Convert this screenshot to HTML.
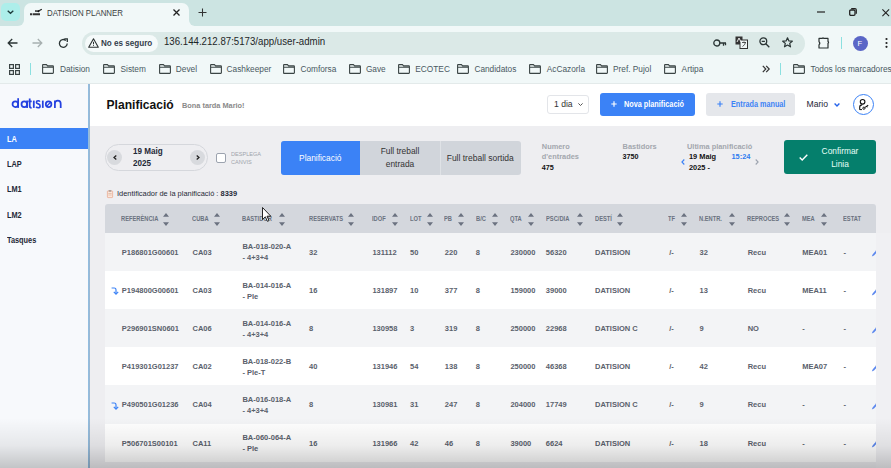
<!DOCTYPE html>
<html><head><meta charset="utf-8">
<style>
*{margin:0;padding:0;box-sizing:border-box}
html,body{width:891px;height:468px;overflow:hidden}
body{position:relative;font-family:"Liberation Sans",sans-serif;background:#eeeef1;color:#222}
.a{position:absolute;white-space:nowrap;line-height:1}
svg{position:absolute;overflow:visible}
#tabbar{position:absolute;left:0;top:0;width:891px;height:26px;background:#cce4e2}
#toolbar{position:absolute;left:0;top:26px;width:891px;height:57px;background:#f1f8f8}
.bm{position:absolute;top:64px;font-size:8.3px;color:#3c4a4a;line-height:10px}
.fold{position:absolute;top:63.5px;width:12px;height:10px}
</style></head><body>

<!-- ============ TAB BAR ============ -->
<div id="tabbar"></div>
<div class="a" style="left:1px;top:2.5px;width:18.5px;height:18.5px;background:#adeeea;border-radius:5px;z-index:2"></div>
<svg style="left:7px;top:10.3px;z-index:3" width="7" height="4" viewBox="0 0 7 4"><path d="M0.7 0.7 L3.5 3.3 L6.3 0.7" fill="none" stroke="#1c3a3a" stroke-width="1.3"/></svg>
<div class="a" style="left:18px;top:20px;width:176px;height:6px;background:#f1f8f8"></div><div class="a" style="left:12px;top:14px;width:12px;height:12px;background:#cce4e2;border-radius:0 0 6px 0"></div><div class="a" style="left:188.5px;top:14px;width:12px;height:12px;background:#cce4e2;border-radius:0 0 0 6px"></div><div class="a" style="left:24px;top:2.5px;width:164.5px;height:26px;background:#f1f8f8;border-radius:7px 7px 0 0"></div>
<!-- favicon -->
<svg style="left:29px;top:8px" width="14" height="8" viewBox="0 0 14 8"><path d="M1 6.2 H3.2 M3.8 6.2 H11" stroke="#333" stroke-width="2"/><path d="M6 3 L9 3.2 L10.5 2.5 L12.8 1.2" stroke="#222" stroke-width="1.3" fill="none"/><circle cx="9.5" cy="3.3" r="1" fill="#111"/></svg>
<div class="a" style="left:47px;top:8.8px;font-size:9px;color:#3a3f3f;transform:scaleX(0.875);transform-origin:0 0">DATISION PLANNER</div>
<svg style="left:173.3px;top:8.6px" width="7" height="7" viewBox="0 0 7 7"><path d="M0.5 0.5 L6.5 6.5 M6.5 0.5 L0.5 6.5" stroke="#222" stroke-width="1.3"/></svg>
<svg style="left:197.5px;top:7.5px" width="9" height="9" viewBox="0 0 9 9"><path d="M4.5 0.5 V8.5 M0.5 4.5 H8.5" stroke="#333" stroke-width="1.05"/></svg>
<!-- window controls -->
<svg style="left:817px;top:11px" width="8" height="2" viewBox="0 0 8 2"><path d="M0 1 H8" stroke="#222" stroke-width="1.2"/></svg>
<svg style="left:848.5px;top:8.3px" width="8" height="8" viewBox="0 0 8 8"><rect x="0.7" y="2" width="5.3" height="5.3" rx="1.1" fill="none" stroke="#222" stroke-width="1.3"/><path d="M2.2 0.7 H6 Q7.3 0.7 7.3 2 V5.8" fill="none" stroke="#222" stroke-width="1.2"/></svg>
<svg style="left:881.5px;top:8.5px" width="7.5" height="7.5" viewBox="0 0 7.5 7.5"><path d="M0.4 0.4 L7.1 7.1 M7.1 0.4 L0.4 7.1" stroke="#222" stroke-width="1.1"/></svg>

<!-- ============ TOOLBAR ============ -->
<div id="toolbar"></div>
<svg style="left:7px;top:38px" width="11" height="10" viewBox="0 0 11 10"><path d="M10.5 5 H1.2 M5.2 1 L1.2 5 L5.2 9" fill="none" stroke="#2b3535" stroke-width="1.3"/></svg>
<svg style="left:32px;top:38px" width="11" height="10" viewBox="0 0 11 10"><path d="M0.5 5 H9.8 M5.8 1 L9.8 5 L5.8 9" fill="none" stroke="#a7b0b0" stroke-width="1.3"/></svg>
<svg style="left:58px;top:37.5px" width="11" height="11" viewBox="0 0 11 11"><path d="M9.2 5.5 A3.9 3.9 0 1 1 7.8 2.4" fill="none" stroke="#2b3535" stroke-width="1.3"/><path d="M6.3 0.9 H9.3 V3.9" fill="none" stroke="#2b3535" stroke-width="1.3"/></svg>
<div class="a" style="left:81.5px;top:32px;width:723px;height:23px;background:#dbe9e7;border-radius:12px"></div>
<div class="a" style="left:84.5px;top:34.5px;width:73.5px;height:17px;background:#f5fafa;border-radius:9px"></div>
<svg style="left:88px;top:38px" width="11" height="10" viewBox="0 0 11 10"><path d="M5.5 0.8 L10.3 9.2 H0.7 Z" fill="none" stroke="#2d3333" stroke-width="1.1" stroke-linejoin="round"/><path d="M5.5 3.8 V6.3 M5.5 7.2 V8" stroke="#2d3333" stroke-width="1"/></svg>
<div class="a" style="left:101px;top:39.2px;font-size:9px;font-weight:bold;color:#34404c;transform:scaleX(0.9);transform-origin:0 0">No es seguro</div>
<div class="a" style="left:164px;top:37.4px;font-size:10.4px;color:#1d2628;transform:scaleX(0.93);transform-origin:0 0">136.144.212.87:5173/app/user-admin</div>
<!-- right icons -->
<svg style="left:712.5px;top:38.5px" width="14" height="8" viewBox="0 0 14 8"><circle cx="3.8" cy="4" r="3" fill="none" stroke="#2b3535" stroke-width="1.3"/><path d="M6.8 4 H13 M10.5 4 V6.8 M12.5 4 V6.2" fill="none" stroke="#2b3535" stroke-width="1.3"/></svg>
<svg style="left:735px;top:36px" width="13" height="13" viewBox="0 0 13 13"><rect x="0.5" y="0.5" width="7" height="8" fill="#333" /><rect x="5" y="4" width="7.5" height="8.5" fill="#f1f8f8" stroke="#333" stroke-width="1"/><path d="M2 6 L4 2 L6 6" stroke="#fff" fill="none" stroke-width="0.9"/><path d="M7 6.5 H11 M9 5.5 V6.5 M7.5 10.5 Q10 9 10.5 6.5" stroke="#333" fill="none" stroke-width="0.8"/></svg>
<svg style="left:758.5px;top:37px" width="11" height="11" viewBox="0 0 11 11"><circle cx="4.3" cy="4.3" r="3.4" fill="none" stroke="#2b3535" stroke-width="1.3"/><path d="M6.8 6.8 L10.3 10.3 M2.7 4.3 H5.9" stroke="#2b3535" stroke-width="1.3"/></svg>
<svg style="left:781.5px;top:37px" width="11" height="11" viewBox="0 0 11 11"><path d="M5.5 0.8 L6.9 4 L10.3 4.2 L7.7 6.4 L8.5 9.8 L5.5 8 L2.5 9.8 L3.3 6.4 L0.7 4.2 L4.1 4 Z" fill="none" stroke="#2b3535" stroke-width="1.2" stroke-linejoin="round"/></svg>
<svg style="left:817.5px;top:36.5px" width="12" height="12" viewBox="0 0 12 12"><path d="M1 1.4 H4.3 Q5 0.4 5.7 1.4 H10 V4.6 Q11.1 5.4 10 6.2 V11 H1 V7.8 Q2.6 6.2 1 4.6 Z" fill="none" stroke="#2a3232" stroke-width="1.2" stroke-linejoin="round"/></svg>
<div class="a" style="left:840.5px;top:37px;width:1.2px;height:12px;background:#8be0e0"></div>
<div class="a" style="left:853px;top:35.5px;width:15px;height:15px;border-radius:50%;background:#5a66c6"></div>
<div class="a" style="left:857.5px;top:39.5px;font-size:7.5px;color:#fff">F</div>
<svg style="left:884.5px;top:37px" width="3" height="12" viewBox="0 0 3 12"><circle cx="1.5" cy="2" r="1.1" fill="#222"/><circle cx="1.5" cy="6" r="1.1" fill="#222"/><circle cx="1.5" cy="9.8" r="1.1" fill="#222"/></svg>

<!-- ============ BOOKMARKS ============ -->
<svg style="left:9px;top:64px" width="11" height="11" viewBox="0 0 11 11"><rect x="0.6" y="0.6" width="3.8" height="3.8" fill="none" stroke="#3a4444" stroke-width="1.2"/><rect x="6.6" y="0.6" width="3.8" height="3.8" fill="none" stroke="#3a4444" stroke-width="1.2"/><rect x="0.6" y="6.6" width="3.8" height="3.8" fill="none" stroke="#3a4444" stroke-width="1.2"/><rect x="6.6" y="6.6" width="3.8" height="3.8" fill="none" stroke="#3a4444" stroke-width="1.2"/></svg>
<div class="a" style="left:30px;top:63px;width:1.2px;height:12px;background:#8be0e0"></div>

<svg style="left:42px;top:64px" width="12" height="10" viewBox="0 0 12 10"><path d="M0.6 1.2 Q0.6 0.6 1.2 0.6 H4.4 L5.6 1.9 H10.8 Q11.4 1.9 11.4 2.5 V8.8 Q11.4 9.4 10.8 9.4 H1.2 Q0.6 9.4 0.6 8.8 Z M0.6 3.2 H11.4" fill="none" stroke="#3a4444" stroke-width="1.1"/></svg>
<div class="a" style="left:60px;top:64.5px;font-size:8.3px;color:#4a5862">Datision</div>
<svg style="left:103.4px;top:64px" width="12" height="10" viewBox="0 0 12 10"><path d="M0.6 1.2 Q0.6 0.6 1.2 0.6 H4.4 L5.6 1.9 H10.8 Q11.4 1.9 11.4 2.5 V8.8 Q11.4 9.4 10.8 9.4 H1.2 Q0.6 9.4 0.6 8.8 Z M0.6 3.2 H11.4" fill="none" stroke="#3a4444" stroke-width="1.1"/></svg>
<div class="a" style="left:120.5px;top:64.5px;font-size:8.3px;color:#4a5862">Sistem</div>
<svg style="left:159px;top:64px" width="12" height="10" viewBox="0 0 12 10"><path d="M0.6 1.2 Q0.6 0.6 1.2 0.6 H4.4 L5.6 1.9 H10.8 Q11.4 1.9 11.4 2.5 V8.8 Q11.4 9.4 10.8 9.4 H1.2 Q0.6 9.4 0.6 8.8 Z M0.6 3.2 H11.4" fill="none" stroke="#3a4444" stroke-width="1.1"/></svg>
<div class="a" style="left:175.8px;top:64.5px;font-size:8.3px;color:#4a5862">Devel</div>
<svg style="left:209.8px;top:64px" width="12" height="10" viewBox="0 0 12 10"><path d="M0.6 1.2 Q0.6 0.6 1.2 0.6 H4.4 L5.6 1.9 H10.8 Q11.4 1.9 11.4 2.5 V8.8 Q11.4 9.4 10.8 9.4 H1.2 Q0.6 9.4 0.6 8.8 Z M0.6 3.2 H11.4" fill="none" stroke="#3a4444" stroke-width="1.1"/></svg>
<div class="a" style="left:226.6px;top:64.5px;font-size:8.3px;color:#4a5862">Cashkeeper</div>
<svg style="left:282.8px;top:64px" width="12" height="10" viewBox="0 0 12 10"><path d="M0.6 1.2 Q0.6 0.6 1.2 0.6 H4.4 L5.6 1.9 H10.8 Q11.4 1.9 11.4 2.5 V8.8 Q11.4 9.4 10.8 9.4 H1.2 Q0.6 9.4 0.6 8.8 Z M0.6 3.2 H11.4" fill="none" stroke="#3a4444" stroke-width="1.1"/></svg>
<div class="a" style="left:300.4px;top:64.5px;font-size:8.3px;color:#4a5862">Comforsa</div>
<svg style="left:348.5px;top:64px" width="12" height="10" viewBox="0 0 12 10"><path d="M0.6 1.2 Q0.6 0.6 1.2 0.6 H4.4 L5.6 1.9 H10.8 Q11.4 1.9 11.4 2.5 V8.8 Q11.4 9.4 10.8 9.4 H1.2 Q0.6 9.4 0.6 8.8 Z M0.6 3.2 H11.4" fill="none" stroke="#3a4444" stroke-width="1.1"/></svg>
<div class="a" style="left:365.9px;top:64.5px;font-size:8.3px;color:#4a5862">Gave</div>
<svg style="left:397.9px;top:64px" width="12" height="10" viewBox="0 0 12 10"><path d="M0.6 1.2 Q0.6 0.6 1.2 0.6 H4.4 L5.6 1.9 H10.8 Q11.4 1.9 11.4 2.5 V8.8 Q11.4 9.4 10.8 9.4 H1.2 Q0.6 9.4 0.6 8.8 Z M0.6 3.2 H11.4" fill="none" stroke="#3a4444" stroke-width="1.1"/></svg>
<div class="a" style="left:415.3px;top:64.5px;font-size:8.3px;color:#4a5862">ECOTEC</div>
<svg style="left:457px;top:64px" width="12" height="10" viewBox="0 0 12 10"><path d="M0.6 1.2 Q0.6 0.6 1.2 0.6 H4.4 L5.6 1.9 H10.8 Q11.4 1.9 11.4 2.5 V8.8 Q11.4 9.4 10.8 9.4 H1.2 Q0.6 9.4 0.6 8.8 Z M0.6 3.2 H11.4" fill="none" stroke="#3a4444" stroke-width="1.1"/></svg>
<div class="a" style="left:474.4px;top:64.5px;font-size:8.3px;color:#4a5862">Candidatos</div>
<svg style="left:529.4px;top:64px" width="12" height="10" viewBox="0 0 12 10"><path d="M0.6 1.2 Q0.6 0.6 1.2 0.6 H4.4 L5.6 1.9 H10.8 Q11.4 1.9 11.4 2.5 V8.8 Q11.4 9.4 10.8 9.4 H1.2 Q0.6 9.4 0.6 8.8 Z M0.6 3.2 H11.4" fill="none" stroke="#3a4444" stroke-width="1.1"/></svg>
<div class="a" style="left:546.8px;top:64.5px;font-size:8.3px;color:#4a5862">AcCazorla</div>
<svg style="left:596px;top:64px" width="12" height="10" viewBox="0 0 12 10"><path d="M0.6 1.2 Q0.6 0.6 1.2 0.6 H4.4 L5.6 1.9 H10.8 Q11.4 1.9 11.4 2.5 V8.8 Q11.4 9.4 10.8 9.4 H1.2 Q0.6 9.4 0.6 8.8 Z M0.6 3.2 H11.4" fill="none" stroke="#3a4444" stroke-width="1.1"/></svg>
<div class="a" style="left:613px;top:64.5px;font-size:8.3px;color:#4a5862">Pref. Pujol</div>
<svg style="left:663.7px;top:64px" width="12" height="10" viewBox="0 0 12 10"><path d="M0.6 1.2 Q0.6 0.6 1.2 0.6 H4.4 L5.6 1.9 H10.8 Q11.4 1.9 11.4 2.5 V8.8 Q11.4 9.4 10.8 9.4 H1.2 Q0.6 9.4 0.6 8.8 Z M0.6 3.2 H11.4" fill="none" stroke="#3a4444" stroke-width="1.1"/></svg>
<div class="a" style="left:681.6px;top:64.5px;font-size:8.3px;color:#4a5862">Artipa</div>
<svg style="left:792.7px;top:64px" width="12" height="10" viewBox="0 0 12 10"><path d="M0.6 1.2 Q0.6 0.6 1.2 0.6 H4.4 L5.6 1.9 H10.8 Q11.4 1.9 11.4 2.5 V8.8 Q11.4 9.4 10.8 9.4 H1.2 Q0.6 9.4 0.6 8.8 Z M0.6 3.2 H11.4" fill="none" stroke="#3a4444" stroke-width="1.1"/></svg>
<div class="a" style="left:810.6px;top:64.5px;font-size:8.3px;color:#4a5862">Todos los marcadores</div>
<svg style="left:761.5px;top:65px" width="8" height="8" viewBox="0 0 8 8"><path d="M0.8 0.8 L3.8 4 L0.8 7.2 M4.2 0.8 L7.2 4 L4.2 7.2" fill="none" stroke="#333" stroke-width="1.2"/></svg>
<div class="a" style="left:780px;top:63px;width:1.2px;height:12px;background:#8be0e0"></div>
<div class="a" style="left:0;top:83px;width:891px;height:385px;background:#eeeef1"></div>
<div class="a" style="left:0;top:83px;width:891px;height:1px;background:#e3eaea"></div>
<div class="a" style="left:0;top:84px;width:88.5px;height:384px;background:#f7f9fc"></div>
<div class="a" style="left:88px;top:84px;width:2px;height:384px;background:linear-gradient(to right,#8dbfe6,#9fb6cc)"></div>
<svg style="left:11px;top:97px" width="52" height="12" viewBox="0 0 52 12"><g fill="none" stroke="#2441e0" stroke-width="1.75"><circle cx="4.35" cy="7.25" r="2.8"/><path d="M7.15 1.2 V10.9"/><circle cx="13.3" cy="7.25" r="2.8"/><path d="M16.1 3.6 V10.9"/><path d="M18.7 1.6 V9 Q18.7 10.9 20.6 10.9 M17.3 4.4 H20.7"/><path d="M22.8 3.6 V10.9"/><path d="M28.9 4.6 Q28.3 3.7 27.1 3.7 Q25.4 3.7 25.4 5.2 Q25.4 6.5 27.2 6.9 Q29.1 7.3 29.1 8.9 Q29.1 10.8 27.2 10.8 Q25.8 10.8 25.1 9.7" stroke-width="1.6"/><path d="M31.8 3.6 V10.9"/><circle cx="37.6" cy="7.25" r="2.8"/><path d="M35.6 9.4 L39.6 5.1" stroke-width="1.3"/><path d="M43.9 3.6 V10.9 M43.9 6.8 Q43.9 3.6 46.8 3.6 Q49.7 3.6 49.7 6.8 V10.9"/></g></svg>
<div class="a" style="left:0;top:128px;width:88px;height:21px;background:#3b82f6"></div>
<div class="a" style="left:7px;top:134.7px;font-size:8.6px;font-weight:bold;color:#fff;transform:scaleX(0.855);transform-origin:0 0">LA</div>
<div class="a" style="left:7px;top:160.0px;font-size:8.6px;font-weight:bold;color:#1f2937;transform:scaleX(0.855);transform-origin:0 0">LAP</div>
<div class="a" style="left:7px;top:185.29999999999998px;font-size:8.6px;font-weight:bold;color:#1f2937;transform:scaleX(0.855);transform-origin:0 0">LM1</div>
<div class="a" style="left:7px;top:210.6px;font-size:8.6px;font-weight:bold;color:#1f2937;transform:scaleX(0.855);transform-origin:0 0">LM2</div>
<div class="a" style="left:7px;top:235.9px;font-size:8.6px;font-weight:bold;color:#1f2937;transform:scaleX(0.855);transform-origin:0 0">Tasques</div>
<div class="a" style="left:90px;top:84px;width:801px;height:41.7px;background:#fff"></div>
<div class="a" style="left:106.5px;top:99.2px;font-size:12.1px;font-weight:bold;color:#111">Planificació</div>
<div class="a" style="left:182px;top:101.8px;font-size:8px;font-weight:bold;color:#8a8a8a;transform:scaleX(0.92);transform-origin:0 0">Bona tarda Mario!</div>
<div class="a" style="left:547px;top:94.5px;width:41.5px;height:19.5px;background:#fff;border:1px solid #e3e5e9;border-radius:3px"></div>
<div class="a" style="left:554px;top:99.8px;font-size:8.6px;color:#333">1 dia</div>
<svg style="left:578px;top:102.5px" width="5" height="3" viewBox="0 0 5 3"><path d="M0.4 0.4 L2.5 2.5 L4.6 0.4" fill="none" stroke="#555" stroke-width="1"/></svg>
<div class="a" style="left:600px;top:92.5px;width:95px;height:23.3px;background:#3b82f6;border-radius:3px"></div>
<svg style="left:610.5px;top:100.8px" width="6" height="6" viewBox="0 0 6 6"><path d="M3 0.3 V5.7 M0.3 3 H5.7" stroke="#fff" stroke-width="1.15"/></svg>
<div class="a" style="left:624px;top:101.4px;font-size:8.2px;font-weight:bold;color:#fff;transform:scaleX(0.89);transform-origin:0 0">Nova planificació</div>
<div class="a" style="left:706px;top:92.7px;width:89px;height:23.2px;background:#e5e7eb;border-radius:3px"></div>
<svg style="left:716.5px;top:100.8px" width="6" height="6" viewBox="0 0 6 6"><path d="M3 0.3 V5.7 M0.3 3 H5.7" stroke="#3b82f6" stroke-width="1.15"/></svg>
<div class="a" style="left:730.6px;top:101.4px;font-size:8.2px;font-weight:bold;color:#3b82f6;transform:scaleX(0.885);transform-origin:0 0">Entrada manual</div>
<div class="a" style="left:806.5px;top:99.5px;font-size:8.6px;color:#1f2937">Mario</div>
<svg style="left:834px;top:102.5px" width="6" height="4" viewBox="0 0 6 4"><path d="M0.6 0.6 L3 3 L5.4 0.6" fill="none" stroke="#2563eb" stroke-width="1.4"/></svg>
<div class="a" style="left:852.5px;top:93.5px;width:21px;height:21px;border-radius:50%;border:1.2px solid #3b82f6;background:#fff"></div>
<svg style="left:857px;top:97.5px" width="13" height="13" viewBox="0 0 13 13"><circle cx="5.6" cy="3.8" r="2.3" fill="none" stroke="#111" stroke-width="1.1"/><path d="M2.7 11.7 V9.2 Q2.7 6.9 5.2 6.9" fill="none" stroke="#111" stroke-width="1.1"/><path d="M2.7 11.6 H5" stroke="#111" stroke-width="1"/><circle cx="6.9" cy="10.2" r="1.1" fill="none" stroke="#111" stroke-width="1"/><path d="M8 9.4 L11.2 7.2 M9.8 8.4 L10.6 9.2" stroke="#111" stroke-width="1.1"/></svg>
<div class="a" style="left:104.6px;top:144px;width:103px;height:26.5px;border:1px solid #d5d7dc;border-radius:13.5px"></div>
<div class="a" style="left:107.3px;top:149.8px;width:15px;height:15px;border-radius:50%;background:#d8dade"></div>
<div class="a" style="left:189.8px;top:149.8px;width:15px;height:15px;border-radius:50%;background:#d8dade"></div>
<svg style="left:113px;top:155px" width="4" height="5" viewBox="0 0 4 5"><path d="M3.3 0.4 L1 2.5 L3.3 4.6" fill="none" stroke="#222" stroke-width="1.3"/></svg>
<svg style="left:196.3px;top:155px" width="4" height="5" viewBox="0 0 4 5"><path d="M0.7 0.4 L3 2.5 L0.7 4.6" fill="none" stroke="#222" stroke-width="1.3"/></svg>
<div class="a" style="left:133.4px;top:146.9px;font-size:8.8px;font-weight:bold;color:#1f2937;transform:scaleX(0.92);transform-origin:0 0">19 Maig</div>
<div class="a" style="left:133.4px;top:159.3px;font-size:8.8px;font-weight:bold;color:#1f2937;transform:scaleX(0.92);transform-origin:0 0">2025</div>
<div class="a" style="left:216px;top:153px;width:10.3px;height:9.6px;background:#fff;border:1px solid #9ca3af;border-radius:2px"></div>
<div class="a" style="left:230.6px;top:150.5px;font-size:6px;color:#a0a4ab;transform:scaleX(0.93);transform-origin:0 0">DESPLEGA</div>
<div class="a" style="left:230.6px;top:159px;font-size:6px;color:#a0a4ab;transform:scaleX(0.93);transform-origin:0 0">CANVIS</div>
<div class="a" style="left:280.5px;top:141px;width:240px;height:33.5px;background:#d1d5db;border-radius:3px;overflow:hidden"><div style="position:absolute;left:0;top:0;width:79.5px;height:33.5px;background:#3b82f6"></div><div style="position:absolute;left:159.5px;top:0;width:1px;height:33.5px;background:#dfe2e6"></div></div>
<div class="a" style="left:280.5px;top:153.5px;width:79.5px;text-align:center;font-size:8.4px;color:#fff">Planificació</div>
<div class="a" style="left:360px;top:147px;width:80px;text-align:center;font-size:8.4px;color:#333">Full treball</div>
<div class="a" style="left:360px;top:159.5px;width:80px;text-align:center;font-size:8.4px;color:#333">entrada</div>
<div class="a" style="left:440px;top:153.5px;width:80.5px;text-align:center;font-size:8.5px;color:#333">Full treball sortida</div>
<div class="a" style="left:541.8px;top:142.5px;font-size:7.4px;font-weight:bold;color:#a3a7ae">Numero</div>
<div class="a" style="left:541.8px;top:152.9px;font-size:7.4px;font-weight:bold;color:#a3a7ae">d'entrades</div>
<div class="a" style="left:541.8px;top:163.70000000000002px;font-size:7.2px;font-weight:bold;color:#111">475</div>
<div class="a" style="left:622.6px;top:142.5px;font-size:7.4px;font-weight:bold;color:#a3a7ae">Bastidors</div>
<div class="a" style="left:622.6px;top:153.0px;font-size:7.2px;font-weight:bold;color:#111">3750</div>
<div class="a" style="left:687px;top:142.5px;font-size:7.4px;font-weight:bold;color:#a3a7ae">Ultima planificació</div>
<div class="a" style="left:689px;top:152.9px;font-size:7.4px;font-weight:bold;color:#111">19 Maig</div>
<div class="a" style="left:689px;top:163.60000000000002px;font-size:7.4px;font-weight:bold;color:#111">2025 -</div>
<div class="a" style="left:731.5px;top:152.9px;font-size:7.4px;font-weight:bold;color:#2f7bf0">15:24</div>
<svg style="left:680.5px;top:158.5px" width="4" height="6" viewBox="0 0 4 6"><path d="M3.3 0.5 L0.9 3 L3.3 5.5" fill="none" stroke="#3b82f6" stroke-width="1.1"/></svg>
<svg style="left:755px;top:158.5px" width="4" height="6" viewBox="0 0 4 6"><path d="M0.7 0.5 L3.1 3 L0.7 5.5" fill="none" stroke="#9ca3af" stroke-width="1.1"/></svg>
<div class="a" style="left:784px;top:140.3px;width:92px;height:34.2px;background:#057f6c;border-radius:3px"></div>
<svg style="left:798.5px;top:154px" width="9" height="7" viewBox="0 0 9 7"><path d="M0.7 3.6 L3.2 6 L8.3 0.8" fill="none" stroke="#fff" stroke-width="1.4"/></svg>
<div class="a" style="left:815px;top:147.2px;width:50px;text-align:center;font-size:8.4px;color:#e6fff8">Confirmar</div>
<div class="a" style="left:815px;top:159.6px;width:50px;text-align:center;font-size:8.4px;color:#e6fff8">Linia</div>
<svg style="left:106.5px;top:189.5px" width="6" height="8" viewBox="0 0 6 8"><rect x="0.4" y="0.9" width="5.2" height="6.7" rx="0.6" fill="#fbe6dc" stroke="#eaa58a" stroke-width="0.7"/><rect x="1.7" y="0.3" width="2.6" height="1.3" fill="#9a8f8a"/><path d="M1.3 3.5 H4.7 M1.3 5 H4.7" stroke="#d3a080" stroke-width="0.5"/></svg>
<div class="a" style="left:116.7px;top:190.1px;font-size:7.9px;color:#1f2937;transform:scaleX(0.94);transform-origin:0 0">Identificador de la planificació : <b>8339</b></div>
<div class="a" style="left:105px;top:203.5px;width:770.5px;height:29px;background:#d4d7dd;border-radius:3px 3px 0 0"></div>
<div class="a" style="left:121px;top:216.4px;font-size:6.6px;font-weight:bold;color:#6b7280;transform:scaleX(0.87);transform-origin:0 0">REFERÈNCIA</div>
<svg style="left:163.4px;top:213px" width="6" height="13" viewBox="0 0 6 13"><path d="M0 3.8 L3 0 L6 3.8 Z M0 9.2 L3 13 L6 9.2 Z" fill="#6b7280"/></svg>
<div class="a" style="left:191.6px;top:216.4px;font-size:6.6px;font-weight:bold;color:#6b7280;transform:scaleX(0.87);transform-origin:0 0">CUBA</div>
<svg style="left:214px;top:213px" width="6" height="13" viewBox="0 0 6 13"><path d="M0 3.8 L3 0 L6 3.8 Z M0 9.2 L3 13 L6 9.2 Z" fill="#6b7280"/></svg>
<div class="a" style="left:241.8px;top:216.4px;font-size:6.6px;font-weight:bold;color:#6b7280;transform:scaleX(0.87);transform-origin:0 0">BASTIDOR</div>
<svg style="left:278.7px;top:213px" width="6" height="13" viewBox="0 0 6 13"><path d="M0 3.8 L3 0 L6 3.8 Z M0 9.2 L3 13 L6 9.2 Z" fill="#6b7280"/></svg>
<div class="a" style="left:308.5px;top:216.4px;font-size:6.6px;font-weight:bold;color:#6b7280;transform:scaleX(0.87);transform-origin:0 0">RESERVATS</div>
<svg style="left:348px;top:213px" width="6" height="13" viewBox="0 0 6 13"><path d="M0 3.8 L3 0 L6 3.8 Z M0 9.2 L3 13 L6 9.2 Z" fill="#6b7280"/></svg>
<div class="a" style="left:371.8px;top:216.4px;font-size:6.6px;font-weight:bold;color:#6b7280;transform:scaleX(0.87);transform-origin:0 0">IDOF</div>
<svg style="left:391.7px;top:213px" width="6" height="13" viewBox="0 0 6 13"><path d="M0 3.8 L3 0 L6 3.8 Z M0 9.2 L3 13 L6 9.2 Z" fill="#6b7280"/></svg>
<div class="a" style="left:409.5px;top:216.4px;font-size:6.6px;font-weight:bold;color:#6b7280;transform:scaleX(0.87);transform-origin:0 0">LOT</div>
<svg style="left:426.7px;top:213px" width="6" height="13" viewBox="0 0 6 13"><path d="M0 3.8 L3 0 L6 3.8 Z M0 9.2 L3 13 L6 9.2 Z" fill="#6b7280"/></svg>
<div class="a" style="left:444px;top:216.4px;font-size:6.6px;font-weight:bold;color:#6b7280;transform:scaleX(0.87);transform-origin:0 0">PB</div>
<svg style="left:457.7px;top:213px" width="6" height="13" viewBox="0 0 6 13"><path d="M0 3.8 L3 0 L6 3.8 Z M0 9.2 L3 13 L6 9.2 Z" fill="#6b7280"/></svg>
<div class="a" style="left:475.8px;top:216.4px;font-size:6.6px;font-weight:bold;color:#6b7280;transform:scaleX(0.87);transform-origin:0 0">B/C</div>
<svg style="left:492.3px;top:213px" width="6" height="13" viewBox="0 0 6 13"><path d="M0 3.8 L3 0 L6 3.8 Z M0 9.2 L3 13 L6 9.2 Z" fill="#6b7280"/></svg>
<div class="a" style="left:509.8px;top:216.4px;font-size:6.6px;font-weight:bold;color:#6b7280;transform:scaleX(0.87);transform-origin:0 0">QTA</div>
<svg style="left:527.7px;top:213px" width="6" height="13" viewBox="0 0 6 13"><path d="M0 3.8 L3 0 L6 3.8 Z M0 9.2 L3 13 L6 9.2 Z" fill="#6b7280"/></svg>
<div class="a" style="left:545.5px;top:216.4px;font-size:6.6px;font-weight:bold;color:#6b7280;transform:scaleX(0.87);transform-origin:0 0">PSC/DIA</div>
<svg style="left:576.5px;top:213px" width="6" height="13" viewBox="0 0 6 13"><path d="M0 3.8 L3 0 L6 3.8 Z M0 9.2 L3 13 L6 9.2 Z" fill="#6b7280"/></svg>
<div class="a" style="left:594.6px;top:216.4px;font-size:6.6px;font-weight:bold;color:#6b7280;transform:scaleX(0.87);transform-origin:0 0">DESTÍ</div>
<svg style="left:616.7px;top:213px" width="6" height="13" viewBox="0 0 6 13"><path d="M0 3.8 L3 0 L6 3.8 Z M0 9.2 L3 13 L6 9.2 Z" fill="#6b7280"/></svg>
<div class="a" style="left:668.4px;top:216.4px;font-size:6.6px;font-weight:bold;color:#6b7280;transform:scaleX(0.87);transform-origin:0 0">TF</div>
<svg style="left:681px;top:213px" width="6" height="13" viewBox="0 0 6 13"><path d="M0 3.8 L3 0 L6 3.8 Z M0 9.2 L3 13 L6 9.2 Z" fill="#6b7280"/></svg>
<div class="a" style="left:699px;top:216.4px;font-size:6.6px;font-weight:bold;color:#6b7280;transform:scaleX(0.87);transform-origin:0 0">N.ENTR.</div>
<svg style="left:729px;top:213px" width="6" height="13" viewBox="0 0 6 13"><path d="M0 3.8 L3 0 L6 3.8 Z M0 9.2 L3 13 L6 9.2 Z" fill="#6b7280"/></svg>
<div class="a" style="left:747.4px;top:216.4px;font-size:6.6px;font-weight:bold;color:#6b7280;transform:scaleX(0.87);transform-origin:0 0">REPROCES</div>
<svg style="left:784px;top:213px" width="6" height="13" viewBox="0 0 6 13"><path d="M0 3.8 L3 0 L6 3.8 Z M0 9.2 L3 13 L6 9.2 Z" fill="#6b7280"/></svg>
<div class="a" style="left:802px;top:216.4px;font-size:6.6px;font-weight:bold;color:#6b7280;transform:scaleX(0.87);transform-origin:0 0">MEA</div>
<svg style="left:821.4px;top:213px" width="6" height="13" viewBox="0 0 6 13"><path d="M0 3.8 L3 0 L6 3.8 Z M0 9.2 L3 13 L6 9.2 Z" fill="#6b7280"/></svg>
<div class="a" style="left:842.5px;top:216.4px;font-size:6.6px;font-weight:bold;color:#6b7280;transform:scaleX(0.87);transform-origin:0 0">ESTAT</div>
<div class="a" style="left:105px;top:232.5px;width:770.5px;height:38.300000000000004px;background:#f3f4f6"></div>
<div class="a" style="left:121.8px;top:248.55px;font-size:7.5px;font-weight:bold;color:#5a616c">P186801G00601</div>
<div class="a" style="left:192.5px;top:248.55px;font-size:7.5px;font-weight:bold;color:#5a616c">CA03</div>
<div class="a" style="left:242.4px;top:243.45000000000002px;font-size:7.5px;font-weight:bold;color:#5a616c">BA-018-020-A</div>
<div class="a" style="left:242.4px;top:254.45px;font-size:7.5px;font-weight:bold;color:#5a616c">- 4+3+4</div>
<div class="a" style="left:309px;top:248.55px;font-size:7.5px;font-weight:bold;color:#5a616c">32</div>
<div class="a" style="left:372.4px;top:248.55px;font-size:7.5px;font-weight:bold;color:#5a616c">131112</div>
<div class="a" style="left:410px;top:248.55px;font-size:7.5px;font-weight:bold;color:#5a616c">50</div>
<div class="a" style="left:444.8px;top:248.55px;font-size:7.5px;font-weight:bold;color:#5a616c">220</div>
<div class="a" style="left:475.8px;top:248.55px;font-size:7.5px;font-weight:bold;color:#5a616c">8</div>
<div class="a" style="left:510.4px;top:248.55px;font-size:7.5px;font-weight:bold;color:#5a616c">230000</div>
<div class="a" style="left:545.8px;top:248.55px;font-size:7.5px;font-weight:bold;color:#5a616c">56320</div>
<div class="a" style="left:595px;top:248.55px;font-size:7.5px;font-weight:bold;color:#5a616c">DATISION</div>
<div class="a" style="left:669.2px;top:248.55px;font-size:7.5px;font-weight:bold;color:#5a616c">/-</div>
<div class="a" style="left:699.5px;top:248.55px;font-size:7.5px;font-weight:bold;color:#5a616c">32</div>
<div class="a" style="left:747.7px;top:248.55px;font-size:7.5px;font-weight:bold;color:#5a616c">Recu</div>
<div class="a" style="left:802.2px;top:248.55px;font-size:7.5px;font-weight:bold;color:#5a616c">MEA01</div>
<div class="a" style="left:843.6px;top:248.55px;font-size:7.5px;font-weight:bold;color:#5a616c">-</div>
<svg style="left:871px;top:250.3px" width="8" height="8" viewBox="0 0 8 8"><path d="M0.8 6.6 L1.6 4.4 L4.6 1 L6 2.2 L3 5.6 Z" fill="#5b87ee"/><path d="M4.9 0.8 L5.6 0.1 L6.6 1.2" stroke="#6b7ba0" stroke-width="0.8" fill="none"/></svg>
<div class="a" style="left:105px;top:270.7px;width:770.5px;height:38.300000000000004px;background:#ffffff"></div>
<div class="a" style="left:121.8px;top:286.75px;font-size:7.5px;font-weight:bold;color:#5a616c">P194800G00601</div>
<div class="a" style="left:192.5px;top:286.75px;font-size:7.5px;font-weight:bold;color:#5a616c">CA03</div>
<div class="a" style="left:242.4px;top:281.65px;font-size:7.5px;font-weight:bold;color:#5a616c">BA-014-016-A</div>
<div class="a" style="left:242.4px;top:292.65px;font-size:7.5px;font-weight:bold;color:#5a616c">- Ple</div>
<div class="a" style="left:309px;top:286.75px;font-size:7.5px;font-weight:bold;color:#5a616c">16</div>
<div class="a" style="left:372.4px;top:286.75px;font-size:7.5px;font-weight:bold;color:#5a616c">131897</div>
<div class="a" style="left:410px;top:286.75px;font-size:7.5px;font-weight:bold;color:#5a616c">10</div>
<div class="a" style="left:444.8px;top:286.75px;font-size:7.5px;font-weight:bold;color:#5a616c">377</div>
<div class="a" style="left:475.8px;top:286.75px;font-size:7.5px;font-weight:bold;color:#5a616c">8</div>
<div class="a" style="left:510.4px;top:286.75px;font-size:7.5px;font-weight:bold;color:#5a616c">159000</div>
<div class="a" style="left:545.8px;top:286.75px;font-size:7.5px;font-weight:bold;color:#5a616c">39000</div>
<div class="a" style="left:595px;top:286.75px;font-size:7.5px;font-weight:bold;color:#5a616c">DATISION</div>
<div class="a" style="left:669.2px;top:286.75px;font-size:7.5px;font-weight:bold;color:#5a616c">/-</div>
<div class="a" style="left:699.5px;top:286.75px;font-size:7.5px;font-weight:bold;color:#5a616c">13</div>
<div class="a" style="left:747.7px;top:286.75px;font-size:7.5px;font-weight:bold;color:#5a616c">Recu</div>
<div class="a" style="left:802.2px;top:286.75px;font-size:7.5px;font-weight:bold;color:#5a616c">MEA11</div>
<div class="a" style="left:843.6px;top:286.75px;font-size:7.5px;font-weight:bold;color:#5a616c">-</div>
<svg style="left:110.7px;top:286.9px" width="8" height="8" viewBox="0 0 8 8"><path d="M0.6 1 H3.2 Q5 1 5 2.8 V6.8" fill="none" stroke="#3b82f6" stroke-width="1.2"/><path d="M2.8 4.8 L5 7.2 L7.2 4.8" fill="none" stroke="#3b82f6" stroke-width="1.2"/></svg>
<svg style="left:871px;top:288.5px" width="8" height="8" viewBox="0 0 8 8"><path d="M0.8 6.6 L1.6 4.4 L4.6 1 L6 2.2 L3 5.6 Z" fill="#5b87ee"/><path d="M4.9 0.8 L5.6 0.1 L6.6 1.2" stroke="#6b7ba0" stroke-width="0.8" fill="none"/></svg>
<div class="a" style="left:105px;top:308.9px;width:770.5px;height:38.300000000000004px;background:#f3f4f6"></div>
<div class="a" style="left:121.8px;top:324.95px;font-size:7.5px;font-weight:bold;color:#5a616c">P296901SN0601</div>
<div class="a" style="left:192.5px;top:324.95px;font-size:7.5px;font-weight:bold;color:#5a616c">CA06</div>
<div class="a" style="left:242.4px;top:319.84999999999997px;font-size:7.5px;font-weight:bold;color:#5a616c">BA-014-016-A</div>
<div class="a" style="left:242.4px;top:330.84999999999997px;font-size:7.5px;font-weight:bold;color:#5a616c">- 4+3+4</div>
<div class="a" style="left:309px;top:324.95px;font-size:7.5px;font-weight:bold;color:#5a616c">8</div>
<div class="a" style="left:372.4px;top:324.95px;font-size:7.5px;font-weight:bold;color:#5a616c">130958</div>
<div class="a" style="left:410px;top:324.95px;font-size:7.5px;font-weight:bold;color:#5a616c">3</div>
<div class="a" style="left:444.8px;top:324.95px;font-size:7.5px;font-weight:bold;color:#5a616c">319</div>
<div class="a" style="left:475.8px;top:324.95px;font-size:7.5px;font-weight:bold;color:#5a616c">8</div>
<div class="a" style="left:510.4px;top:324.95px;font-size:7.5px;font-weight:bold;color:#5a616c">250000</div>
<div class="a" style="left:545.8px;top:324.95px;font-size:7.5px;font-weight:bold;color:#5a616c">22968</div>
<div class="a" style="left:595px;top:324.95px;font-size:7.5px;font-weight:bold;color:#5a616c">DATISION C</div>
<div class="a" style="left:669.2px;top:324.95px;font-size:7.5px;font-weight:bold;color:#5a616c">/-</div>
<div class="a" style="left:699.5px;top:324.95px;font-size:7.5px;font-weight:bold;color:#5a616c">9</div>
<div class="a" style="left:747.7px;top:324.95px;font-size:7.5px;font-weight:bold;color:#5a616c">NO</div>
<div class="a" style="left:802.2px;top:324.95px;font-size:7.5px;font-weight:bold;color:#5a616c">-</div>
<div class="a" style="left:843.6px;top:324.95px;font-size:7.5px;font-weight:bold;color:#5a616c">-</div>
<svg style="left:871px;top:326.7px" width="8" height="8" viewBox="0 0 8 8"><path d="M0.8 6.6 L1.6 4.4 L4.6 1 L6 2.2 L3 5.6 Z" fill="#5b87ee"/><path d="M4.9 0.8 L5.6 0.1 L6.6 1.2" stroke="#6b7ba0" stroke-width="0.8" fill="none"/></svg>
<div class="a" style="left:105px;top:347.1px;width:770.5px;height:38.300000000000004px;background:#ffffff"></div>
<div class="a" style="left:121.8px;top:363.15000000000003px;font-size:7.5px;font-weight:bold;color:#5a616c">P419301G01237</div>
<div class="a" style="left:192.5px;top:363.15000000000003px;font-size:7.5px;font-weight:bold;color:#5a616c">CA02</div>
<div class="a" style="left:242.4px;top:358.05px;font-size:7.5px;font-weight:bold;color:#5a616c">BA-018-022-B</div>
<div class="a" style="left:242.4px;top:369.05px;font-size:7.5px;font-weight:bold;color:#5a616c">- Ple-T</div>
<div class="a" style="left:309px;top:363.15000000000003px;font-size:7.5px;font-weight:bold;color:#5a616c">40</div>
<div class="a" style="left:372.4px;top:363.15000000000003px;font-size:7.5px;font-weight:bold;color:#5a616c">131946</div>
<div class="a" style="left:410px;top:363.15000000000003px;font-size:7.5px;font-weight:bold;color:#5a616c">54</div>
<div class="a" style="left:444.8px;top:363.15000000000003px;font-size:7.5px;font-weight:bold;color:#5a616c">138</div>
<div class="a" style="left:475.8px;top:363.15000000000003px;font-size:7.5px;font-weight:bold;color:#5a616c">8</div>
<div class="a" style="left:510.4px;top:363.15000000000003px;font-size:7.5px;font-weight:bold;color:#5a616c">250000</div>
<div class="a" style="left:545.8px;top:363.15000000000003px;font-size:7.5px;font-weight:bold;color:#5a616c">46368</div>
<div class="a" style="left:595px;top:363.15000000000003px;font-size:7.5px;font-weight:bold;color:#5a616c">DATISION</div>
<div class="a" style="left:669.2px;top:363.15000000000003px;font-size:7.5px;font-weight:bold;color:#5a616c">/-</div>
<div class="a" style="left:699.5px;top:363.15000000000003px;font-size:7.5px;font-weight:bold;color:#5a616c">42</div>
<div class="a" style="left:747.7px;top:363.15000000000003px;font-size:7.5px;font-weight:bold;color:#5a616c">Recu</div>
<div class="a" style="left:802.2px;top:363.15000000000003px;font-size:7.5px;font-weight:bold;color:#5a616c">MEA07</div>
<div class="a" style="left:843.6px;top:363.15000000000003px;font-size:7.5px;font-weight:bold;color:#5a616c">-</div>
<svg style="left:871px;top:364.90000000000003px" width="8" height="8" viewBox="0 0 8 8"><path d="M0.8 6.6 L1.6 4.4 L4.6 1 L6 2.2 L3 5.6 Z" fill="#5b87ee"/><path d="M4.9 0.8 L5.6 0.1 L6.6 1.2" stroke="#6b7ba0" stroke-width="0.8" fill="none"/></svg>
<div class="a" style="left:105px;top:385.3px;width:770.5px;height:38.300000000000004px;background:#f3f4f6"></div>
<div class="a" style="left:121.8px;top:401.35px;font-size:7.5px;font-weight:bold;color:#5a616c">P490501G01236</div>
<div class="a" style="left:192.5px;top:401.35px;font-size:7.5px;font-weight:bold;color:#5a616c">CA04</div>
<div class="a" style="left:242.4px;top:396.25px;font-size:7.5px;font-weight:bold;color:#5a616c">BA-016-018-A</div>
<div class="a" style="left:242.4px;top:407.25px;font-size:7.5px;font-weight:bold;color:#5a616c">- 4+3+4</div>
<div class="a" style="left:309px;top:401.35px;font-size:7.5px;font-weight:bold;color:#5a616c">8</div>
<div class="a" style="left:372.4px;top:401.35px;font-size:7.5px;font-weight:bold;color:#5a616c">130981</div>
<div class="a" style="left:410px;top:401.35px;font-size:7.5px;font-weight:bold;color:#5a616c">31</div>
<div class="a" style="left:444.8px;top:401.35px;font-size:7.5px;font-weight:bold;color:#5a616c">247</div>
<div class="a" style="left:475.8px;top:401.35px;font-size:7.5px;font-weight:bold;color:#5a616c">8</div>
<div class="a" style="left:510.4px;top:401.35px;font-size:7.5px;font-weight:bold;color:#5a616c">204000</div>
<div class="a" style="left:545.8px;top:401.35px;font-size:7.5px;font-weight:bold;color:#5a616c">17749</div>
<div class="a" style="left:595px;top:401.35px;font-size:7.5px;font-weight:bold;color:#5a616c">DATISION C</div>
<div class="a" style="left:669.2px;top:401.35px;font-size:7.5px;font-weight:bold;color:#5a616c">/-</div>
<div class="a" style="left:699.5px;top:401.35px;font-size:7.5px;font-weight:bold;color:#5a616c">9</div>
<div class="a" style="left:747.7px;top:401.35px;font-size:7.5px;font-weight:bold;color:#5a616c">Recu</div>
<div class="a" style="left:802.2px;top:401.35px;font-size:7.5px;font-weight:bold;color:#5a616c">-</div>
<div class="a" style="left:843.6px;top:401.35px;font-size:7.5px;font-weight:bold;color:#5a616c">-</div>
<svg style="left:110.7px;top:401.5px" width="8" height="8" viewBox="0 0 8 8"><path d="M0.6 1 H3.2 Q5 1 5 2.8 V6.8" fill="none" stroke="#3b82f6" stroke-width="1.2"/><path d="M2.8 4.8 L5 7.2 L7.2 4.8" fill="none" stroke="#3b82f6" stroke-width="1.2"/></svg>
<svg style="left:871px;top:403.1px" width="8" height="8" viewBox="0 0 8 8"><path d="M0.8 6.6 L1.6 4.4 L4.6 1 L6 2.2 L3 5.6 Z" fill="#5b87ee"/><path d="M4.9 0.8 L5.6 0.1 L6.6 1.2" stroke="#6b7ba0" stroke-width="0.8" fill="none"/></svg>
<div class="a" style="left:105px;top:423.5px;width:770.5px;height:38.300000000000004px;background:#ffffff"></div>
<div class="a" style="left:121.8px;top:439.55px;font-size:7.5px;font-weight:bold;color:#5a616c">P506701S00101</div>
<div class="a" style="left:192.5px;top:439.55px;font-size:7.5px;font-weight:bold;color:#5a616c">CA11</div>
<div class="a" style="left:242.4px;top:434.45px;font-size:7.5px;font-weight:bold;color:#5a616c">BA-060-064-A</div>
<div class="a" style="left:242.4px;top:445.45px;font-size:7.5px;font-weight:bold;color:#5a616c">- Ple</div>
<div class="a" style="left:309px;top:439.55px;font-size:7.5px;font-weight:bold;color:#5a616c">16</div>
<div class="a" style="left:372.4px;top:439.55px;font-size:7.5px;font-weight:bold;color:#5a616c">131966</div>
<div class="a" style="left:410px;top:439.55px;font-size:7.5px;font-weight:bold;color:#5a616c">42</div>
<div class="a" style="left:444.8px;top:439.55px;font-size:7.5px;font-weight:bold;color:#5a616c">46</div>
<div class="a" style="left:475.8px;top:439.55px;font-size:7.5px;font-weight:bold;color:#5a616c">8</div>
<div class="a" style="left:510.4px;top:439.55px;font-size:7.5px;font-weight:bold;color:#5a616c">39000</div>
<div class="a" style="left:545.8px;top:439.55px;font-size:7.5px;font-weight:bold;color:#5a616c">6624</div>
<div class="a" style="left:595px;top:439.55px;font-size:7.5px;font-weight:bold;color:#5a616c">DATISION</div>
<div class="a" style="left:669.2px;top:439.55px;font-size:7.5px;font-weight:bold;color:#5a616c">/-</div>
<div class="a" style="left:699.5px;top:439.55px;font-size:7.5px;font-weight:bold;color:#5a616c">18</div>
<div class="a" style="left:747.7px;top:439.55px;font-size:7.5px;font-weight:bold;color:#5a616c">Recu</div>
<div class="a" style="left:802.2px;top:439.55px;font-size:7.5px;font-weight:bold;color:#5a616c">-</div>
<div class="a" style="left:843.6px;top:439.55px;font-size:7.5px;font-weight:bold;color:#5a616c">-</div>
<svg style="left:871px;top:441.3px" width="8" height="8" viewBox="0 0 8 8"><path d="M0.8 6.6 L1.6 4.4 L4.6 1 L6 2.2 L3 5.6 Z" fill="#5b87ee"/><path d="M4.9 0.8 L5.6 0.1 L6.6 1.2" stroke="#6b7ba0" stroke-width="0.8" fill="none"/></svg>
<div class="a" style="left:875.5px;top:232.5px;width:15.5px;height:236px;background:#f0f0f3"></div>
<svg style="left:262px;top:207px" width="10" height="15" viewBox="0 0 10 15"><path d="M0.5 0.5 V12.5 L3.3 9.8 L5.4 14.3 L7 13.6 L5 9.2 H8.8 Z" fill="#fff" stroke="#111" stroke-width="0.9" stroke-linejoin="round"/></svg>
<div class="a" style="left:0;top:418px;width:891px;height:50px;background:linear-gradient(to bottom, rgba(0,0,0,0) 0%, rgba(0,0,0,0.07) 55%, rgba(0,0,0,0.21) 100%)"></div>
</body></html>
